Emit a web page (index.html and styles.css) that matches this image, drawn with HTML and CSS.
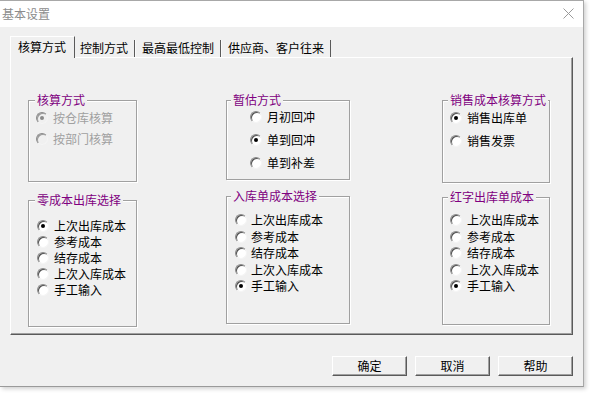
FILE: index.html
```html
<!DOCTYPE html>
<html lang="zh">
<head>
<meta charset="utf-8">
<title>基本设置</title>
<link rel="stylesheet" href="styles.css">
</head>
<body>
<div class="window">
  <div class="titlebar">
    <span class="title">基本设置</span>
    <svg class="close" width="11" height="11" viewBox="0 0 11 11"><path d="M0.5 0.5 L10.5 10.5 M10.5 0.5 L0.5 10.5" stroke="#9a9a9a" stroke-width="1" fill="none"/></svg>
  </div>
  <div class="content">
    <div class="tabs">
      <div class="tab active">核算方式</div>
      <div class="tab">控制方式</div>
      <div class="tab">最高最低控制</div>
      <div class="tab">供应商、客户往来</div>
    </div>
    <div class="panel">
      <div class="col col1">
        <div class="group g-c1r1">
          <span class="legend">核算方式</span>
          <div class="items">
            <label class="item disabled"><span class="radio checked"></span>按仓库核算</label>
            <label class="item disabled"><span class="radio"></span>按部门核算</label>
          </div>
        </div>
        <div class="group g-c1r2">
          <span class="legend">零成本出库选择</span>
          <div class="items">
            <label class="item"><span class="radio checked"></span>上次出库成本</label>
            <label class="item"><span class="radio"></span>参考成本</label>
            <label class="item"><span class="radio"></span>结存成本</label>
            <label class="item"><span class="radio"></span>上次入库成本</label>
            <label class="item"><span class="radio"></span>手工输入</label>
          </div>
        </div>
      </div>
      <div class="col col2">
        <div class="group g-c2r1">
          <span class="legend">暂估方式</span>
          <div class="items">
            <label class="item"><span class="radio"></span>月初回冲</label>
            <label class="item"><span class="radio checked"></span>单到回冲</label>
            <label class="item"><span class="radio"></span>单到补差</label>
          </div>
        </div>
        <div class="group g-c2r2">
          <span class="legend">入库单成本选择</span>
          <div class="items">
            <label class="item"><span class="radio"></span>上次出库成本</label>
            <label class="item"><span class="radio"></span>参考成本</label>
            <label class="item"><span class="radio"></span>结存成本</label>
            <label class="item"><span class="radio"></span>上次入库成本</label>
            <label class="item"><span class="radio checked"></span>手工输入</label>
          </div>
        </div>
      </div>
      <div class="col col3">
        <div class="group g-c3r1">
          <span class="legend">销售成本核算方式</span>
          <div class="items">
            <label class="item"><span class="radio checked"></span>销售出库单</label>
            <label class="item"><span class="radio"></span>销售发票</label>
          </div>
        </div>
        <div class="group g-c3r2">
          <span class="legend">红字出库单成本</span>
          <div class="items">
            <label class="item"><span class="radio"></span>上次出库成本</label>
            <label class="item"><span class="radio"></span>参考成本</label>
            <label class="item"><span class="radio"></span>结存成本</label>
            <label class="item"><span class="radio"></span>上次入库成本</label>
            <label class="item"><span class="radio checked"></span>手工输入</label>
          </div>
        </div>
      </div>
    </div>
    <div class="buttons">
      <button class="btn">确定</button>
      <button class="btn">取消</button>
      <button class="btn">帮助</button>
    </div>
  </div>
</div>
</body>
</html>
```
FILE: styles.css
```css
* { box-sizing: border-box; }
html, body { margin: 0; padding: 0; }
body {
  background: #ffffff;
  font-family: "Noto Sans CJK SC", "Liberation Sans", sans-serif;
  font-size: 12px;
  color: #000;
  width: 591px;
  height: 395px;
  overflow: hidden;
}
.window {
  width: 584px;
  height: 387px;
  background: #f0f0f0;
  border-top: 1px solid #a8a8a8;
  border-right: 1px solid #a8a8a8;
  border-bottom: 1px solid #9a9a9a;
  box-shadow: 2px 2px 4px rgba(0,0,0,0.18);
  display: flex;
  flex-direction: column;
}
.titlebar {
  height: 26px;
  background: #fff;
  display: flex;
  align-items: center;
  justify-content: space-between;
  padding: 0 9px 0 2px;
}
.title { color: #8c8c8c; line-height: 16px; margin-top: -1px; }
.close { display: block; margin-top: -2px; }
.content {
  padding: 9px 10px 0 10px;
  display: flex;
  flex-direction: column;
}
.tabs {
  display: flex;
  align-items: flex-end;
  height: 21px;
  position: relative;
  z-index: 1;
}
.tab {
  height: 17px;
  line-height: 15px;
  padding: 0 6px;
  border-left: 1px solid #fafafa;
  border-right: 1px solid #5a5a5a;
  white-space: nowrap;
}
.tab.active {
  height: 22px;
  line-height: 16px;
  padding: 2px 8px 0 7px;
  border-top: 1px solid #fff;
  border-left: 1px solid #fff;
  background: #f0f0f0;
  margin-bottom: -1px;
}
.tab.active + .tab { padding-left: 4px; border-left-color: transparent; }
.panel {
  width: 563px;
  height: 278px;
  border-top: 1px solid #fff;
  border-left: 1px solid #fff;
  border-right: 1px solid #5a5a5a;
  border-bottom: 1px solid #5a5a5a;
  box-shadow: inset -1px -1px 0 #a0a0a0;
  padding: 42px 0 0 17px;
  display: flex;
  align-items: flex-start;
}
.col { display: flex; flex-direction: column; }
.col1 { width: 109px; }
.col2 { width: 124px; margin-left: 89px; }
.col3 { width: 108px; margin-left: 92px; }
.group {
  position: relative;
  border: 1px solid #a0a0a0;
  box-shadow: 1px 1px 0 #fff, inset 1px 1px 0 #fff;
}
.legend {
  position: absolute;
  top: -9px;
  left: 6px;
  padding: 0 2px;
  line-height: 15px;
  background: #f0f0f0;
  color: #800080;
  white-space: nowrap;
}
.col2 .legend { left: 4px; }
.col3 .legend { left: 5px; }
.items { display: flex; flex-direction: column; }
.item {
  display: flex;
  align-items: center;
  height: 16px;
  line-height: 16px;
  gap: 5px;
  white-space: nowrap;
}
.item.disabled { color: #a0a0a0; }
.radio {
  width: 12px;
  height: 12px;
  flex: none;
  border-radius: 50%;
  background: #fff;
  border: 1px solid;
  border-color: #8a8a8a #f4f4f4 #f4f4f4 #8a8a8a;
  box-shadow: inset 1px 1px 0 #505050;
  display: flex;
  align-items: center;
  justify-content: center;
}
.radio.checked::after {
  content: "";
  width: 4px;
  height: 4px;
  border-radius: 50%;
  background: #000;
}
.disabled .radio { background: #f0f0f0; box-shadow: inset 1px 1px 0 #9a9a9a; }
.disabled .radio.checked::after { background: #8a8a8a; }

.g-c1r1 { height: 82px; }
.g-c1r1 .items { padding: 9px 0 0 7px; gap: 5px; }
.g-c1r2 { height: 127px; margin-top: 18px; }
.g-c1r2 .items { padding: 17px 0 0 8px; gap: 0; }

.g-c2r1 { height: 80px; }
.g-c2r1 .items { padding: 8px 0 0 23px; gap: 7px; }
.g-c2r2 { height: 128px; margin-top: 16px; }
.g-c2r2 .items { padding: 15px 0 0 8px; gap: 0.5px; }
.g-c2r2 .item { gap: 4px; }

.g-c3r1 { height: 83px; }
.g-c3r1 .items { padding: 9px 0 0 7px; gap: 7px; }
.g-c3r2 { height: 128px; margin-top: 14px; }
.g-c3r2 .items { padding: 14px 0 0 7px; gap: 0.5px; }

.buttons {
  display: flex;
  justify-content: flex-end;
  gap: 8px;
  margin-top: 21px;
  padding-right: 0;
  width: 563px;
}
.btn {
  width: 75px;
  height: 20px;
  padding: 0;
  font-family: "Noto Sans CJK SC", "Liberation Sans", sans-serif;
  font-size: 12px;
  line-height: 16px;
  color: #000;
  background: #f0f0f0;
  border: 1px solid;
  border-color: #fff #5a5a5a #5a5a5a #fff;
  box-shadow: inset -1px -1px 0 #a0a0a0;
}
```
